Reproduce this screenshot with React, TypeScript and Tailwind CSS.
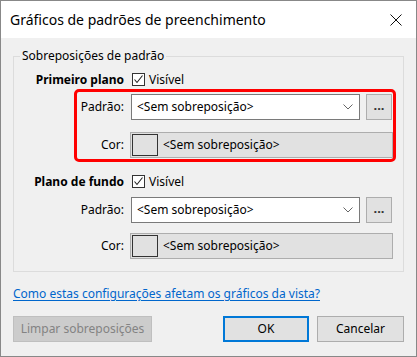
function Checkbox() {
  return (
    <span className="flex h-[13px] w-[13px] items-center justify-center border border-[#333] bg-white">
      <svg width="11" height="11" viewBox="0 0 11 11" fill="none">
        <path d="M1.5 5.5 L4 8.5 L9.5 1.5" stroke="#222" strokeWidth="1.1" />
      </svg>
    </span>
  )
}

function OverrideRows({ highlighted }: { highlighted?: boolean }) {
  return (
    <div
      className={
        highlighted
          ? "ml-[60px] flex w-[322px] flex-col gap-[12px] rounded-[5px] border-[3px] border-[#ff0000] pt-[2px] pb-[1px]"
          : "ml-[60px] flex w-[322px] flex-col gap-[10px] border-[3px] border-transparent pt-[2px] pb-[1px]"
      }
    >
      <div className="flex items-center">
        <span className="w-[47px] text-right">Padrão:</span>
        <div className="ml-[7px] flex h-[26px] w-[229px] items-center justify-between border border-[#7a7a7a] bg-white pl-[5px] pr-[6px]">
          <span>&lt;Sem sobreposição&gt;</span>
          <svg width="10" height="6" viewBox="0 0 10 6" fill="none">
            <path d="M0.5 0.5 L5 5 L9.5 0.5" stroke="#666" strokeWidth="1" />
          </svg>
        </div>
        <button className="ml-[6px] flex h-[26px] w-[26px] items-end justify-center border border-[#adadad] bg-[#e1e1e1] pb-[7px] text-[13px] font-bold leading-none text-[#333]">
          ...
        </button>
      </div>
      <div className="flex items-center">
        <span className="w-[47px] text-right">Cor:</span>
        <div className="ml-[6px] flex h-[26px] w-[263px] items-center gap-[5px] border border-[#adadad] bg-[#e1e1e1] pl-[1px]">
          <span className="h-[22px] w-[26px] border border-[#333] bg-[#e1e1e1]" />
          <span>&lt;Sem sobreposição&gt;</span>
        </div>
      </div>
    </div>
  )
}

function VisibleRow({ label }: { label: string }) {
  return (
    <div className="flex h-[13px] items-center">
      <span className="w-[110px] text-right font-bold">{label}</span>
      <span className="ml-[8px]">
        <Checkbox />
      </span>
      <span className="ml-[4px]">Visível</span>
    </div>
  )
}

export default function App() {
  return (
    <div
      className="flex h-[357px] w-[417px] flex-col border border-[#888] bg-[#f0f0f0] text-[12px] leading-[16px] text-black"
      style={{ fontFamily: '"Noto Sans", "Open Sans", sans-serif' }}
    >
      <div className="flex h-[37px] items-center justify-between bg-white pl-[9px] pr-[14px]">
        <span className="text-[14px]">Gráficos de padrões de preenchimento</span>
        <svg width="12" height="12" viewBox="0 0 12 12" fill="none">
          <path d="M0.5 0.5 L11.5 11.5 M11.5 0.5 L0.5 11.5" stroke="#111" strokeWidth="1" />
        </svg>
      </div>

      <fieldset className="mx-[12px] mt-[10px] h-[224px] border border-[#dcdcdc]">
        <legend className="ml-[6px] px-[2px] leading-[16px]">Sobreposições de padrão</legend>
        <div className="mt-[9px]">
          <VisibleRow label="Primeiro plano" />
        </div>
        <div className="mt-[3px]">
          <OverrideRows highlighted />
        </div>
        <div className="mt-[13px]">
          <VisibleRow label="Plano de fundo" />
        </div>
        <div className="mt-[4px]">
          <OverrideRows />
        </div>
      </fieldset>

      <a className="mt-[14px] ml-[12px] w-fit text-[#0066cc] underline underline-offset-2" href="#">
        Como estas configurações afetam os gráficos da vista?
      </a>

      <div className="mt-[14px] flex items-center px-[12px]">
        <button className="h-[26px] w-[139px] border border-[#bfbfbf] bg-[#cccccc] text-[#838383]">
          Limpar sobreposições
        </button>
        <button className="ml-auto h-[26px] w-[86px] border-2 border-[#0078d7] bg-[#e1e1e1]">OK</button>
        <button className="ml-[8px] h-[26px] w-[87px] border border-[#adadad] bg-[#e1e1e1]">Cancelar</button>
      </div>
    </div>
  )
}
